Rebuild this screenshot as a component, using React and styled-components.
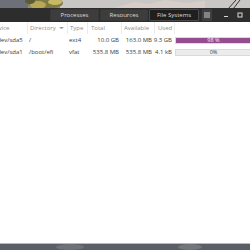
import React from 'react';
import styled, { createGlobalStyle } from 'styled-components';

const GlobalStyle = createGlobalStyle`
  html, body {
    margin: 0;
    padding: 0;
    background: #5d6068;
  }
  * {
    box-sizing: border-box;
  }
`;

const Desktop = styled.div`
  position: relative;
  width: 250px;
  height: 250px;
  overflow: hidden;
  background: linear-gradient(180deg, #7c7e84 0%, #55585f 100%);
  font-family: 'Open Sans', 'Noto Sans', sans-serif;
`;

const Wallpaper = styled.svg`
  position: absolute;
  left: 0;
  top: 0;
  width: 250px;
  height: 250px;
`;

const Window = styled.div`
  position: absolute;
  left: -12px;
  top: 8px;
  width: 276px;
  height: 236px;
  display: flex;
  flex-direction: column;
  background: #ffffff;
  border-bottom: 1px solid #b9b9b9;
`;

const HeaderBar = styled.div`
  height: 14px;
  flex: none;
  display: flex;
  align-items: center;
  background: #2d2d2d;
`;

const Side = styled.div`
  flex: 1 1 0;
  display: flex;
  align-items: center;
  height: 100%;
  justify-content: ${(p) => (p.end ? 'flex-start' : 'flex-end')};
  padding-left: ${(p) => (p.end ? '3px' : '0')};
`;

const Switcher = styled.div`
  display: flex;
  gap: 1px;
  height: 12px;
`;

const Tab = styled.div`
  width: ${(p) => p.w}px;
  height: 12px;
  display: flex;
  align-items: center;
  justify-content: center;
  font-size: 6px;
  color: #dedbd6;
  border-radius: 1px;
  background: ${(p) => (p.active ? '#1f1f1f' : '#3d3d3d')};
  border: 1px solid ${(p) => (p.active ? '#4a4a4a' : '#383838')};
`;

const MenuButton = styled.div`
  width: 10px;
  height: 12px;
  border-radius: 1px;
  background: #3f3f3f;
  display: flex;
  align-items: center;
  justify-content: center;
`;

const Control = styled.div`
  width: 14px;
  height: 12px;
  display: flex;
  align-items: center;
  justify-content: center;
  margin-left: ${(p) => p.gap || 0}px;
`;

const Table = styled.div`
  display: grid;
  grid-template-columns: 39px 40px 20px 34px 33px 20px 1fr;
  font-size: 6px;
  color: #3c3c3c;
`;

const HeadCell = styled.div`
  height: 12px;
  display: flex;
  align-items: center;
  gap: 3px;
  padding-left: ${(p) => p.pl ?? 2}px;
  color: #8d8d8d;
  border-left: ${(p) => (p.first ? 'none' : '1px solid #ececec')};
  white-space: nowrap;
`;

const Cell = styled.div`
  height: 12px;
  display: flex;
  align-items: center;
  justify-content: ${(p) => (p.right ? 'flex-end' : 'flex-start')};
  padding: 0 ${(p) => (p.right ? 2 : 0)}px 0 ${(p) => p.pl ?? 2}px;
  white-space: nowrap;
`;

const BarCell = styled.div`
  height: 12px;
  display: flex;
  align-items: center;
  padding-left: 1px;
`;

const Bar = styled.div`
  position: relative;
  width: 100%;
  height: 7px;
  background: #ececec;
  border: 1px solid #dadada;
`;

const Fill = styled.div`
  height: 100%;
  background: #944e90;
`;

const BarLabel = styled.span`
  position: absolute;
  left: 0;
  top: 0;
  width: 75px;
  height: 100%;
  display: flex;
  align-items: center;
  justify-content: center;
  font-size: 5.5px;
  color: ${(p) => (p.light ? '#f4eaf3' : '#3c3c3c')};
`;

const rows = [
  { device: '/dev/sda5', dir: '/', type: 'ext4', total: '10.0 GB', avail: '163.0 MB', used: '9.3 GB', pct: 98 },
  { device: '/dev/sda1', dir: '/boot/efi', type: 'vfat', total: '535.8 MB', avail: '535.8 MB', used: '4.1 kB', pct: 0 },
];

const App = () => (
  <>
    <GlobalStyle />
    <Desktop>
      <Wallpaper viewBox="0 0 250 250">
        <rect x="0" y="0" width="250" height="9" fill="#8a8c92" />
        <rect x="60" y="0" width="190" height="9" fill="#c9c7c6" />
        <path d="M110 9 L135 2 L150 4 L165 0 L185 3 L205 1 L205 9 Z" fill="#d8cdc8" />
        <path d="M0 0 H28 V9 H0 Z" fill="#6d7079" />
        <ellipse cx="45" cy="3" rx="18" ry="6" fill="#7d7a45" />
        <ellipse cx="38" cy="5" rx="8" ry="4" fill="#b8a856" />
        <ellipse cx="55" cy="2" rx="7" ry="3" fill="#c9b964" />
        <ellipse cx="30" cy="1" rx="5" ry="3" fill="#5d5a38" />
        <path d="M228 9 L236 0 M233 9 L240 0" stroke="#333" strokeWidth="1" />
        <rect x="0" y="244" width="250" height="6" fill="#5b5e66" />
        <ellipse cx="70" cy="247" rx="14" ry="3" fill="#6e7178" />
        <ellipse cx="190" cy="247" rx="12" ry="3" fill="#74767c" />
      </Wallpaper>
      <Window>
        <HeaderBar>
          <Side />
          <Switcher>
            <Tab w={49}>Processes</Tab>
            <Tab w={48}>Resources</Tab>
            <Tab w={50} active>
              File Systems
            </Tab>
          </Switcher>
          <Side end>
            <MenuButton>
              <svg width="6" height="6" viewBox="0 0 6 6">
                <path d="M0 1h6M0 3h6M0 5h6" stroke="#c8c8c8" strokeWidth="1" />
              </svg>
            </MenuButton>
            <Control gap={7}>
              <svg width="6" height="6" viewBox="0 0 6 6">
                <path d="M1 4.5h4" stroke="#d8d8d8" strokeWidth="1" />
              </svg>
            </Control>
            <Control>
              <svg width="6" height="6" viewBox="0 0 6 6">
                <rect x="1" y="1" width="4" height="4" fill="none" stroke="#d8d8d8" strokeWidth="1" />
              </svg>
            </Control>
            <Control>
              <svg width="6" height="6" viewBox="0 0 6 6">
                <path d="M1 1l4 4M5 1l-4 4" stroke="#d8d8d8" strokeWidth="1" />
              </svg>
            </Control>
          </Side>
        </HeaderBar>
        <Table>
          <HeadCell first pl={3}>Device</HeadCell>
          <HeadCell>
            Directory
            <svg width="5" height="4" viewBox="0 0 5 4">
              <path d="M0.5 1l2 2 2-2" fill="#9a9a9a" stroke="#9a9a9a" strokeWidth="0.6" />
            </svg>
          </HeadCell>
          <HeadCell>Type</HeadCell>
          <HeadCell pl={3}>Total</HeadCell>
          <HeadCell>Available</HeadCell>
          <HeadCell pl={3}>Used</HeadCell>
          <HeadCell />
          {rows.map((r) => (
            <React.Fragment key={r.device}>
              <Cell pl={7}>{r.device}</Cell>
              <Cell>{r.dir}</Cell>
              <Cell>{r.type}</Cell>
              <Cell right>{r.total}</Cell>
              <Cell right>{r.avail}</Cell>
              <Cell right pl={0}>{r.used}</Cell>
              <BarCell>
                <Bar>
                  <Fill style={{ width: `${r.pct === 98 ? 100 : r.pct}%` }} />
                  <BarLabel light={r.pct > 50}>{r.pct === 98 ? '98 %' : '0%'}</BarLabel>
                </Bar>
              </BarCell>
            </React.Fragment>
          ))}
        </Table>
      </Window>
    </Desktop>
  </>
);

export default App;
